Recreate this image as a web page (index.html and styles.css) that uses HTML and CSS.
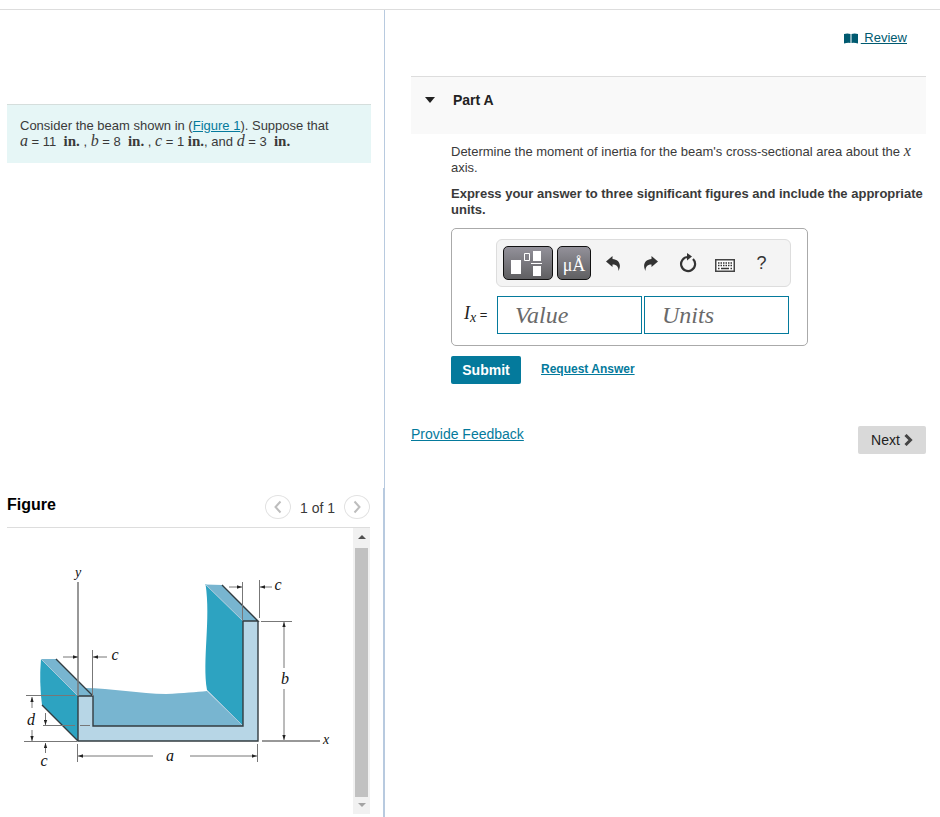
FILE: index.html
```html
<!DOCTYPE html>
<html lang="en">
<head>
<meta charset="utf-8">
<meta name="viewport" content="width=device-width, initial-scale=1">
<title>Moment of inertia: Part A</title>
<link rel="stylesheet" href="styles.css">
</head>
<body>
<div class="page">
  <aside class="sidebar">
    <section class="problem-pane">
      <p class="problem">Consider the beam shown in (<a href="#figure">Figure 1</a>). Suppose that <br><i class="math">a</i> = 11 &nbsp;<span class="math unit">in.</span> , <i class="math">b</i> = 8 &nbsp;<span class="math unit">in.</span> , <i class="math">c</i> = 1 <span class="math unit">in.</span>, and <i class="math">d</i> = 3 &nbsp;<span class="math unit">in.</span></p>
    </section>
    <section class="figure-pane" id="figure">
      <header class="figure-head">
        <h2>Figure</h2>
        <nav class="pager" aria-label="Figures">
          <button type="button" class="round" aria-label="Previous figure"><svg width="10" height="14" viewBox="0 0 10 14"><path d="M7.500 1.500L2.500 7l5 5.500" fill="none" stroke="#bdbdbd" stroke-width="2"/></svg></button>
          <span>1 of 1</span>
          <button type="button" class="round" aria-label="Next figure"><svg width="10" height="14" viewBox="0 0 10 14"><path d="M2.500 1.500l5 5.500-5 5.500" fill="none" stroke="#bdbdbd" stroke-width="2"/></svg></button>
        </nav>
      </header>
      <div class="figure-body">
        <svg class="beam" viewBox="7 528 346 286" role="img" aria-label="Beam cross section with dimensions a, b, c and d">
          <defs>
            <marker id="tip" viewBox="0 0 6 4" refX="6" refY="2" markerWidth="5" markerHeight="4" markerUnits="userSpaceOnUse" orient="auto-start-reverse"><path d="M0 0L6 2 0 4z" fill="#222"/></marker>
          </defs>
          <path fill="#78b5d0" d="M84 688C112 688 140 694 166 694C184 693 196 692 207 691L243 726H93V696z"/>
          <path fill="#2da3c1" d="M41 659L78 696V741L42 705Q39 682 41 659z"/>
          <path fill="#78b5d0" d="M41 659L56 659L93 696H78z"/>
          <path fill="#2da3c1" d="M205.500 584L243 621V726L207 690C202 660 211 620 205.500 584z"/>
          <path fill="#78b5d0" d="M205.500 584.500L222 585L258 621H243z"/>
          <path fill="#b7d6e6" d="M78 696H93V726H243V621H258V741H78z"/>
          <path fill="none" stroke="#a9cbdc" d="M41 659L78 696M205.500 584.500L243 621M207 690L243 726"/>
          <path fill="none" stroke="#333c40" stroke-width="1.400" d="M56 659L93 696V726H243V621H258L222 585M258 621V741H78V696H93M42 705L78 741"/>
          <path fill="none" stroke="#777" stroke-width="1.500" d="M78 582V696M262 741H320"/>
          <g fill="none" stroke="#777">
            <path d="M92.500 650V696M26 695.500H75M24 741.500H77M43 725.500H75M80 725.500H90M77.500 744V762M257.500 744V762M242.500 582V620M259.500 580V618M261 621.500H292"/>
            <g marker-end="url(#tip)">
              <path d="M63 657H78"/><path d="M107 657H93"/>
              <path d="M229 587H242"/><path d="M272 587H260"/>
              <path d="M284 668V622"/><path d="M284 689V740"/>
              <path d="M153 756H78"/><path d="M190 756H257"/>
              <path d="M32 708V697"/><path d="M32 730V741"/>
              <path d="M45.500 713V725"/><path d="M45.500 753V743"/>
            </g>
          </g>
          <g class="beam-label">
            <text class="axis" x="78" y="577">y</text>
            <text x="115" y="660">c</text>
            <text x="278" y="590">c</text>
            <text x="285" y="684">b</text>
            <text class="axis" x="326" y="744">x</text>
            <text x="170" y="761">a</text>
            <text x="31" y="725">d</text>
            <text x="44" y="766">c</text>
          </g>
        </svg>
        <div class="scrollbar" aria-hidden="true">
          <span class="arrow up"></span>
          <span class="thumb"></span>
          <span class="arrow down"></span>
        </div>
      </div>
    </section>
  </aside>

  <main class="content">
    <div class="review">
      <svg width="14" height="11" viewBox="0 0 14 11"><path fill="#005a70" d="M0 1Q3.500 0 6.500 1V10Q3.500 9.500 0 10.500zM7.500 1Q10.500 0 14 1V10.500Q10.500 9.500 7.500 10z"/></svg>
      <a href="#review">&nbsp;Review</a>
    </div>
    <header class="part-head">
      <svg width="10" height="6" viewBox="0 0 10 6"><path fill="#222" d="M0 0H10L5 6z"/></svg>
      <h1>Part A</h1>
    </header>
    <div class="part-body">
      <p>Determine the moment of inertia for the beam's cross-sectional area about the <i class="math">x</i> axis.</p>
      <p class="strong">Express your answer to three significant figures and include the appropriate units.</p>
      <form class="answer">
        <div class="answer-box">
          <div class="toolbar">
            <button type="button" class="dark wide" aria-label="Templates"><svg width="34" height="28" viewBox="0 0 34 28"><path fill="#fff" d="M0 11H10V25H0zM22 2H30V12H22zM20 14H31V15H20zM22 17H30V27H22z"/><path d="M13.500 4.500H18.500V11.500H13.500z" fill="none" stroke="#fff"/></svg></button>
            <button type="button" class="dark">μÅ</button>
            <button type="button" class="tool" aria-label="Undo"><svg width="15" height="15" viewBox="0 0 15 15"><path fill="#333" d="M0 5.500L6.500 0V3C12.500 3.500 16 8 12.500 15C12.500 11 11 8.500 6.500 8.500V11z"/></svg></button>
            <button type="button" class="tool" aria-label="Redo"><svg width="15" height="15" viewBox="0 0 15 15"><path fill="#333" d="M15 5.500L8.500 0V3C2.500 3.500 -1 8 2.500 15C2.500 11 4 8.500 8.500 8.500V11z"/></svg></button>
            <button type="button" class="tool" aria-label="Reset"><svg width="18" height="20" viewBox="0 0 18 20"><path fill="none" stroke="#333" stroke-width="2.200" d="M14 6A7 7 0 1 1 9 4"/><path fill="#333" d="M8 0L13 3.500 8 7.500z"/></svg></button>
            <button type="button" class="tool" aria-label="Keyboard"><svg class="keyboard" width="20" height="13" viewBox="0 0 20 13"><rect x=".75" y=".75" width="18.500" height="11.500" fill="#fff" stroke="#444" stroke-width="1.500"/><path stroke="#333" stroke-width="1.500" stroke-dasharray="1.500 1" d="M3 4H17M3 6.500H17"/><path stroke="#333" stroke-width="1.500" d="M3 9.500H4.500M6 9.500H14M15.500 9.500H17"/></svg></button>
            <button type="button" class="tool" aria-label="Help">?</button>
          </div>
          <label class="symbol" for="value"><i class="math">I<sub>x</sub></i> =</label>
          <div class="fields">
            <input id="value" type="text" placeholder="Value">
            <input type="text" placeholder="Units" aria-label="Units">
          </div>
        </div>
        <div class="actions">
          <button type="submit" class="submit">Submit</button>
          <a href="#answer">Request Answer</a>
        </div>
      </form>
    </div>
    <footer class="foot">
      <a href="#feedback">Provide Feedback</a>
      <button type="button" class="next">Next <svg width="9" height="12" viewBox="0 0 9 12"><path fill="none" stroke="#444" stroke-width="3" d="M1.500 1L6.500 6l-5 5"/></svg></button>
    </footer>
  </main>
</div>
</body>
</html>
```
FILE: styles.css
```css
* { box-sizing: border-box; }

body {
  margin: 0;
  padding-top: 9px;
  background: #fff;
  color: #3a3a3a;
  font: 13px/16px "Liberation Sans", Arial, sans-serif;
}

h1, h2, p { margin: 0; }
a { color: #047a9c; }
button { font-family: inherit; cursor: pointer; }
svg { display: block; flex: none; }

.math {
  font-family: "Liberation Serif", "Times New Roman", serif;
  font-size: 16px;
  line-height: 1px;
}

.unit { font-size: 15px; font-weight: bold; }

.page {
  display: grid;
  grid-template-columns: 384fr 556fr;
  min-height: calc(100vh - 9px);
  border-top: 1px solid #ddd;
}

/* Left column */
.sidebar {
  display: grid;
  grid-template-rows: 478fr 329fr;
}

.problem-pane { padding: 94px 13px 0 7px; }

.problem {
  padding: 13px;
  border-top: 1px solid #d5dedc;
  background: #e6f6f6;
}

.figure-pane {
  display: flex;
  flex-direction: column;
  padding: 0 13px 3px 7px;
  border-right: 1px solid #b8cadf;
}

.figure-head {
  display: flex;
  justify-content: space-between;
  align-items: center;
  height: 40px;
  border-bottom: 1px solid #ddd;
}

.figure-head h2 {
  padding-bottom: 6px;
  color: #000;
  font-size: 16px;
}

.pager {
  display: flex;
  align-items: center;
  gap: 9px;
  font-size: 14px;
}

.round {
  display: flex;
  align-items: center;
  justify-content: center;
  width: 26px;
  height: 24px;
  margin-bottom: 2px;
  padding: 0;
  border: 1px solid #e2e2e2;
  border-radius: 50%;
  background: #fff;
}

.figure-body { display: flex; flex: 1; }

.beam { flex: 1; min-width: 0; }

.beam-label {
  fill: #111;
  font: italic 16px "Liberation Serif", serif;
  text-anchor: middle;
}

.beam-label .axis { font-size: 14px; }

.scrollbar {
  display: flex;
  flex-direction: column;
  align-items: center;
  width: 17px;
  background: #f1f1f1;
}

.thumb { flex: 1; width: 13px; background: #c1c1c1; }

.arrow {
  width: 8px;
  border: solid transparent;
  border-width: 0 4px;
}

.up { margin: 7px 0 9px; border-bottom: 4px solid #505050; }
.down { margin: 6px 0 7px; border-top: 4px solid #a3a3a3; }

/* Right column */
.content {
  padding: 20px 14px 0 26px;
  border-left: 1px solid #b8cadf;
}

.review {
  display: flex;
  align-items: center;
  justify-content: flex-end;
  gap: 3px;
  height: 16px;
  margin-right: 19px;
}

.review a { color: #005a70; }

.part-head {
  display: flex;
  align-items: center;
  gap: 18px;
  height: 58px;
  margin-top: 30px;
  padding: 0 14px 12px;
  border-top: 1px solid #ddd;
  background: #f9f9f9;
}

.part-head h1 { color: #222; font-size: 14px; }

.part-body { padding: 10px 0 0 40px; }
.part-body p { margin-bottom: 10px; }
.strong { font-weight: bold; }

.answer-box {
  display: grid;
  grid-template-columns: 44px 295px;
  row-gap: 9px;
  width: fit-content;
  padding: 10px 16px 11px 0;
  border: 1px solid #aaa;
  border-radius: 5px;
}

.toolbar {
  display: flex;
  grid-column: 2;
  align-items: center;
  height: 48px;
  padding: 0 6px;
  border: 1px solid #ddd;
  border-radius: 6px;
  background: #f4f4f4;
}

.dark {
  display: flex;
  align-items: center;
  justify-content: center;
  width: 34px;
  height: 34px;
  margin-right: 4px;
  padding: 4px 0 0;
  border: 1px solid #111;
  border-radius: 5px;
  background: linear-gradient(#93919a, #5f5f61);
  color: #fff;
  font: 18px/24px "Liberation Serif", serif;
}

.wide { width: 50px; padding: 0; }

.tool {
  display: flex;
  align-items: center;
  justify-content: center;
  width: 37px;
  height: 34px;
  padding: 0;
  border: 0;
  background: none;
  color: #333;
  font-size: 18px;
}

.keyboard { margin-top: 4px; }

.symbol {
  align-self: center;
  padding-left: 12px;
  color: #222;
  white-space: nowrap;
}

.symbol .math { font-size: 18px; }
.symbol sub { font-size: 14px; vertical-align: -3px; }

.fields { display: flex; gap: 2px; padding: 0 1px; }

.fields input {
  width: 145px;
  height: 38px;
  padding: 0 17px;
  border: 1px solid #047a9c;
  background: #fff;
  color: #333;
  font: italic 24px "Liberation Serif", serif;
}

.fields input::placeholder { color: #6a6a6a; opacity: 1; }

.actions {
  display: flex;
  align-items: center;
  gap: 20px;
  margin-top: 10px;
}

.actions a { padding-bottom: 2px; font-size: 12px; font-weight: bold; }

.submit {
  width: 70px;
  height: 28px;
  padding: 0;
  border: 0;
  border-radius: 2px;
  background: #047a9c;
  color: #fff;
  font-size: 14px;
  font-weight: bold;
}

.foot {
  display: flex;
  align-items: flex-start;
  justify-content: space-between;
  margin-top: 42px;
  font-size: 14px;
}

.next {
  display: flex;
  align-items: center;
  justify-content: center;
  gap: 4px;
  width: 68px;
  height: 28px;
  padding: 0;
  border: 0;
  border-radius: 2px;
  background: #d9d9d9;
  color: #222;
  font-size: 14px;
}
```
